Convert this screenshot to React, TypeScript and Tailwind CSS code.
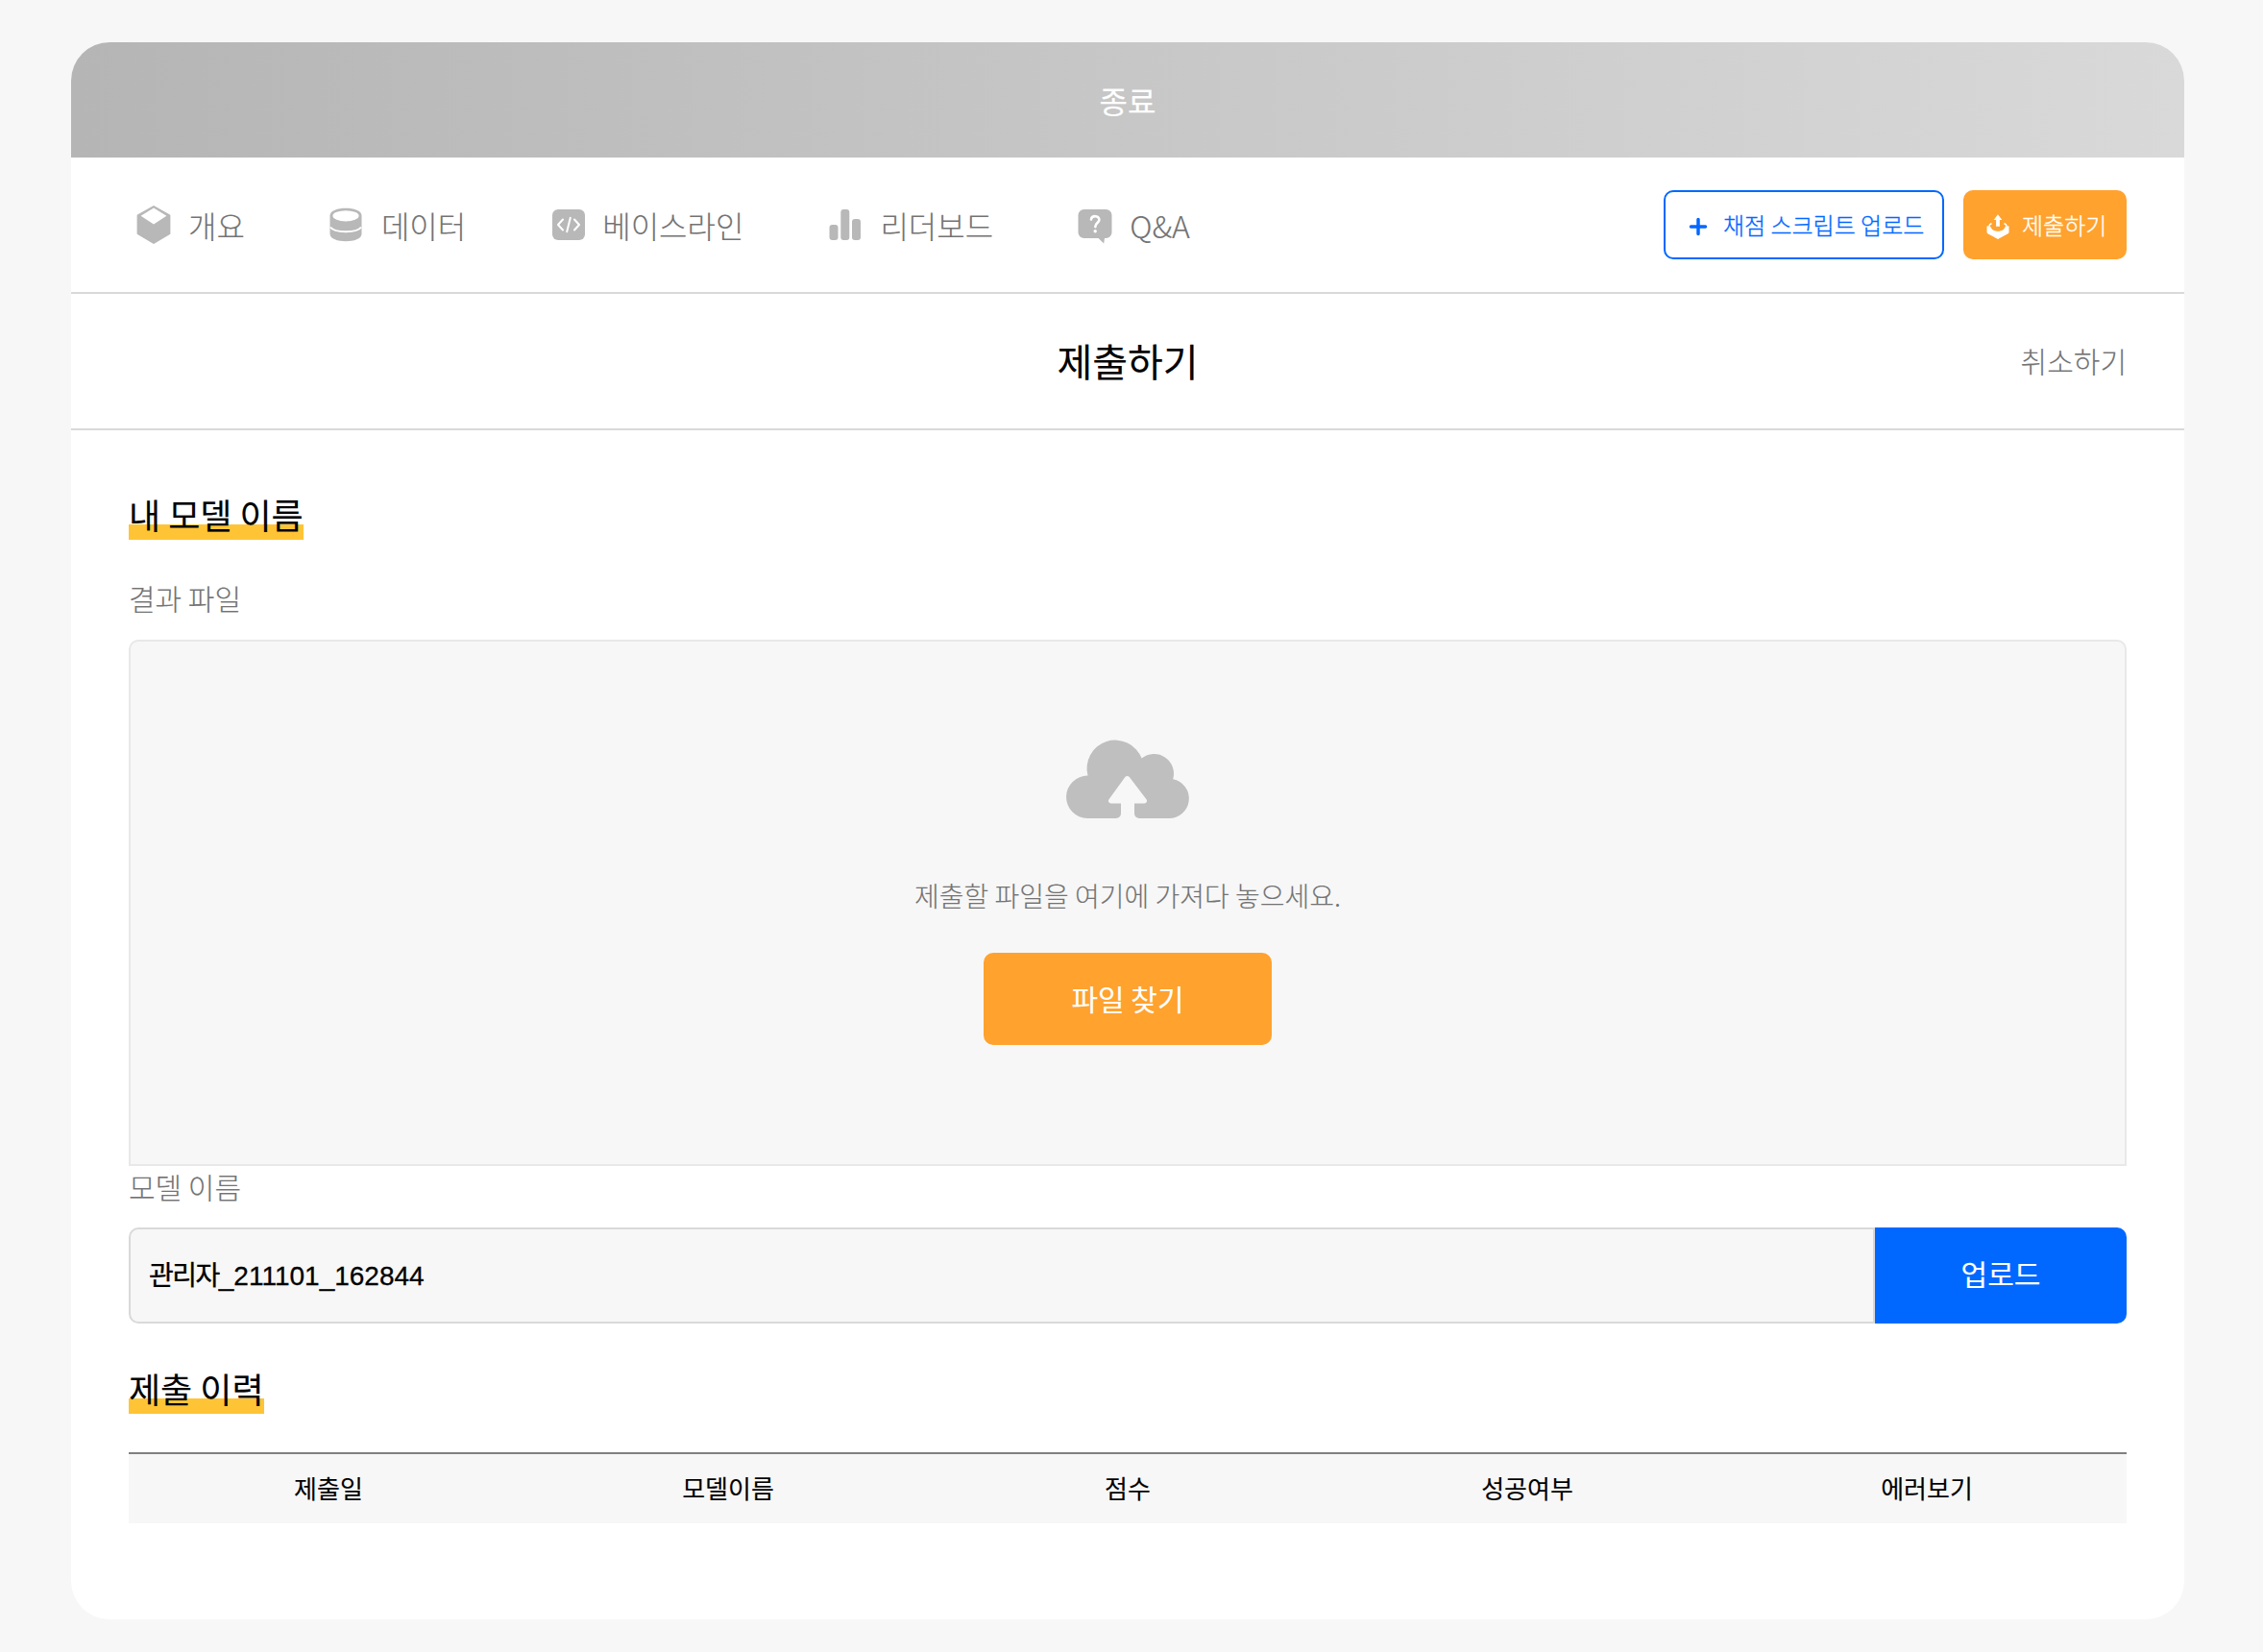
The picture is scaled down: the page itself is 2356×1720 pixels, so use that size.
import React from "react";

const GRAY = "#b8b8b8";

function CubeIcon() {
  return (
    <svg width="40" height="44" viewBox="0 0 40 44" fill="none">
      <path d="M20 3 36.400 12.400v18.800L20 41 3.600 31.200V12.400Z" fill={GRAY} stroke={GRAY} strokeWidth="2" strokeLinejoin="round" />
      <path d="M20 4.600 33.400 12.800 20 21.500 6.600 12.800Z" fill="#fff" />
    </svg>
  );
}

function DatabaseIcon() {
  return (
    <svg width="40" height="44" viewBox="0 0 40 44" fill="none" className="relative -left-px">
      <path d="M3.500 12.500C3.500 2.200 36.500 2.200 36.500 12.500V31.500C36.500 41.800 3.500 41.800 3.500 31.500Z" fill={GRAY} />
      <ellipse cx="20" cy="12.800" rx="13.600" ry="5.600" fill="#fff" />
      <path d="M4 24.500C8 30.700 32 30.700 36 24.500" stroke="#fff" strokeWidth="2" />
    </svg>
  );
}

function CodeIcon() {
  return (
    <svg width="40" height="44" viewBox="0 0 40 44" fill="none" className="relative left-px">
      <rect x="3" y="6" width="34" height="32" rx="6" fill={GRAY} />
      <path d="M14 16.500 9 22l5 5.500M26 16.500 31 22l-5 5.500M21.800 14.800 18.200 29.200" stroke="#fff" strokeWidth="2" strokeLinecap="round" strokeLinejoin="round" />
    </svg>
  );
}

function BarsIcon() {
  return (
    <svg width="40" height="44" viewBox="0 0 40 44" fill={GRAY}>
      <rect x="3.500" y="22" width="9" height="16" rx="3" />
      <rect x="15.300" y="6" width="9" height="32" rx="3" />
      <rect x="27" y="16" width="9" height="22" rx="3" />
    </svg>
  );
}

function QuestionIcon() {
  return (
    <svg width="40" height="44" viewBox="0 0 40 44" fill="none">
      <path d="M8.500 6H31.500a6 6 0 0 1 6 6V30a6 6 0 0 1-6 6H30l-.8 5.500L23.500 36H8.500a6 6 0 0 1-6-6V12a6 6 0 0 1 6-6Z" fill={GRAY} />
      <path d="M16 16.500c.4-4.600 8.600-4.400 8.400.4-.2 3.200-4 3.300-4.100 7.200" stroke="#fff" strokeWidth="2.600" strokeLinecap="round" />
      <circle cx="20.200" cy="28.800" r="1.700" fill="#fff" />
    </svg>
  );
}

function SubmitIcon() {
  return (
    <svg width="26" height="28" viewBox="0 0 26 28" fill="none">
      <path d="M2 13.500 7.500 17.500C10 19.800 16 19.800 18.500 17.500L24 13.500V20.500L13 26.500 2 20.500Z" fill="#fff" stroke="#fff" strokeLinejoin="round" />
      <path d="M6.500 10.500C3.500 12 3 14 6 15.800M19.500 10.500c3 1.500 3.500 3.500.5 5.300" stroke="#fff" strokeWidth="1.600" />
      <path d="M13 1.200 17.300 7H14.900v6.800H11.100V7H8.700Z" fill="#fff" />
    </svg>
  );
}

function CloudIcon() {
  return (
    <svg width="128" height="82" viewBox="0 0 128 82" fill="none" className="relative -top-px overflow-visible">
      <path
        d="M22 82A22 22 0 0 1 22.500 37.600A29.500 29.500 0 0 1 78.600 19.600A20.500 20.500 0 0 1 111.200 41.200A20.600 20.600 0 0 1 106.500 82H76a5 5 0 0 1-5-5V66.500H81.500a2.600 2.600 0 0 0 2-4.200L66 39.300a3 3 0 0 0-4.800 0L44.500 62.300a2.600 2.600 0 0 0 2 4.200H57V77a5 5 0 0 1-5 5Z"
        fill="#bfbfbf"
      />
    </svg>
  );
}

const tabs = [
  { label: "개요", icon: <CubeIcon /> },
  { label: "데이터", icon: <DatabaseIcon /> },
  { label: "베이스라인", icon: <CodeIcon /> },
  { label: "리더보드", icon: <BarsIcon /> },
  { label: "Q&A", icon: <QuestionIcon /> },
];

const columns = ["제출일", "모델이름", "점수", "성공여부", "에러보기"];

function SectionTitle({ children }: { children: React.ReactNode }) {
  return (
    <h2 className="h-[52px] w-fit bg-[linear-gradient(transparent_36px,#ffc436_36px)] text-[36px] leading-[50px] whitespace-nowrap">
      {children}
    </h2>
  );
}

export default function App() {
  return (
    <div className="h-[1720px] w-[2356px] bg-[#f7f7f7] pt-11 pl-[74px] font-['Noto_Sans_CJK_KR',sans-serif] text-black [-webkit-text-stroke:0.12px]">
      <main className="h-[1642px] w-[2200px] overflow-hidden rounded-[40px] bg-white">
        <header className="flex h-[120px] items-center justify-center bg-linear-to-r from-[#b5b5b5] to-[#d9d9d9] text-[32px] text-white">
          <span className="leading-[48px]">종료</span>
        </header>

        <nav className="flex h-[142px] items-center justify-between border-b-2 border-[#d9d9d9] px-[60px]">
          <ul className="flex items-center gap-[86px] pl-1.5">
            {tabs.map((t) => (
              <li key={t.label} className="flex items-center gap-4 text-[32px] leading-[48px] font-light whitespace-nowrap text-[#737373]">
                {t.icon}
                <span>{t.label}</span>
              </li>
            ))}
          </ul>
          <div className="flex gap-5 text-[24px] leading-[36px] font-light whitespace-nowrap [-webkit-text-stroke:0.3px]">
            <button className="flex h-[72px] w-[292px] items-center gap-4 rounded-[10px] border-2 border-[#0068ff] pl-6 text-[#0068ff]">
              <svg width="20" height="20" viewBox="0 0 20 20" className="relative top-0.5" stroke="#0068ff" strokeWidth="3.500" strokeLinecap="round">
                <path d="M10 2.500v15M2.500 10h15" />
              </svg>
              <span>채점 스크립트 업로드</span>
            </button>
            <button className="flex h-[72px] w-[170px] items-center gap-3 rounded-[10px] bg-[#ffa22e] pl-[23px] text-white">
              <span className="relative top-0.5">
                <SubmitIcon />
              </span>
              <span>제출하기</span>
            </button>
          </div>
        </nav>

        <div className="grid h-[142px] grid-cols-[1fr_auto_1fr] items-center border-b-2 border-[#d9d9d9] px-[60px] pb-[3px]">
          <span />
          <h1 className="text-[40px] leading-[60px]">제출하기</h1>
          <a className="justify-self-end text-[30px] leading-[44px] font-light text-[#737373]">취소하기</a>
        </div>

        <div className="flex flex-col px-[60px] pt-[62px]">
          <SectionTitle>내 모델 이름</SectionTitle>
          <label className="mt-[38px] text-[30px] leading-[44px] font-light text-[#737373]">결과 파일</label>
          <section className="mt-[22px] flex h-[548px] flex-col items-center rounded-t-[10px] border-2 border-[#e8e8e8] bg-[#f7f7f7] pt-[103px]">
            <CloudIcon />
            <p className="mt-[58px] text-[28px] leading-[42px] font-light whitespace-nowrap text-[#737373]">
              제출할 파일을 여기에 가져다 놓으세요.
            </p>
            <button className="mt-[39px] h-24 w-[300px] rounded-[10px] bg-[#ffa22e] pb-0.5 text-[30px] leading-[44px] text-white">파일 찾기</button>
          </section>
          <label className="h-[44px] text-[30px] leading-[42px] font-light text-[#737373]">모델 이름</label>
          <div className="mt-5 flex h-[100px]">
            <div className="flex flex-1 items-center rounded-l-[10px] border-2 border-[#d9d9d9] bg-[#f7f7f7] pt-px pl-[19px] font-['Liberation_Sans','Noto_Sans_CJK_KR',sans-serif] text-[28px] leading-[42px] [-webkit-text-stroke:0.3px]">
              <span className="tracking-[-1.5px]">관리자</span>
              <span>_211101_162844</span>
            </div>
            <button className="w-[262px] rounded-r-[10px] bg-[#0068ff] pb-1.5 text-[30px] leading-[44px] text-white">업로드</button>
          </div>
          <div className="mt-[42px]">
            <SectionTitle>제출 이력</SectionTitle>
          </div>
          <div className="mt-10 grid h-[74px] grid-cols-5 items-center border-t-2 border-[#808080] bg-[#f7f7f7] pb-0.5 text-center text-[26px] leading-[38px]">
            {columns.map((c) => (
              <span key={c}>{c}</span>
            ))}
          </div>
        </div>
      </main>
    </div>
  );
}
